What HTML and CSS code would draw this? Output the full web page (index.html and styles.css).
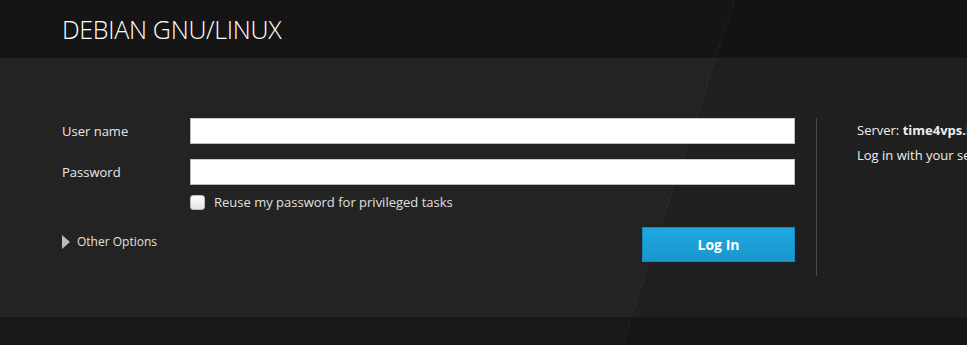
FILE: index.html
```html
<!DOCTYPE html>
<html lang="en">
<head>
    <meta name="viewport" content="width=device-width, initial-scale=1.0" />
    <title>Log in</title>
    <link rel="stylesheet" href="styles.css">
</head>
<body>
    <header class="brand">
        <h1>DEBIAN GNU/LINUX</h1>
    </header>

    <main class="login-band">
        <div class="login-wrap">
            <form class="login-form">
                <label class="field-label" for="login-user">User name</label>
                <input class="field-input" id="login-user" type="text" />

                <label class="field-label" for="login-pass">Password</label>
                <input class="field-input" id="login-pass" type="password" />

                <span></span>
                <label class="reuse">
                    <input type="checkbox" class="reuse-box" />
                    <span>Reuse my password for privileged tasks</span>
                </label>

                <div class="bottom-row">
                    <a class="other-options"><span class="caret"></span>Other Options</a>
                    <button type="button" class="login-button">Log In</button>
                </div>
            </form>

            <div class="divider"></div>

            <div class="server-info">
                <p>Server: <b>time4vps.lt</b></p>
                <p>Log in with your server user account.</p>
            </div>
        </div>
    </main>

    <footer class="bottom-band"></footer>
</body>
</html>
```

FILE: styles.css
```css
html, body {
    height: 100%;
}
body {
    margin: 0;
    font-family: "Open Sans", "Liberation Sans", sans-serif;
    background-color: #181818;
    color: #e6e6e6;
    overflow: hidden;
}

/* diagonal shade on the right side, fixed to the window so the bands line up */
.brand,
.login-band,
.bottom-band {
    background-image: linear-gradient(108deg, transparent 698px, rgba(255, 255, 255, 0.035) 698px, rgba(255, 255, 255, 0.035) 699px, rgba(0, 0, 0, 0.1) 699px);
    background-attachment: fixed;
}

.brand {
    height: 58px;
    background-color: #151515;
    padding-left: 62px;
    display: flex;
    align-items: center;
    box-sizing: border-box;
}
.brand h1 {
    margin: 0;
    font-size: 25px;
    font-weight: 300;
    color: #fff;
    letter-spacing: -0.3px;
}

.login-band {
    height: 259px;
    background-color: #232323;
    padding: 60px 0 0 62px;
    box-sizing: border-box;
}
.login-wrap {
    display: flex;
    align-items: flex-start;
}

.login-form {
    width: 733px;
    flex-shrink: 0;
    display: grid;
    grid-template-columns: 128px 1fr;
    row-gap: 15px;
    align-items: center;
}
.field-label {
    font-size: 13px;
    color: #e8e8e8;
}
.field-input {
    height: 26px;
    box-sizing: border-box;
    border: 1px solid #bbb;
    border-top-color: #ccc;
    background: #fff;
    margin: 0;
}

.reuse {
    display: flex;
    align-items: center;
    gap: 9px;
    font-size: 13px;
    color: #e0e0e0;
    margin-top: -7px;
}
.reuse-box {
    appearance: none;
    width: 15px;
    height: 15px;
    margin: 0;
    border-radius: 3px;
    border: 1px solid #bbb;
    background: linear-gradient(#fff, #e4e4e4);
}

.bottom-row {
    grid-column: 1 / 3;
    display: flex;
    justify-content: space-between;
    align-items: flex-start;
    margin-top: 1px;
}
.other-options {
    display: flex;
    align-items: center;
    gap: 7px;
    font-size: 12px;
    color: #e0e0e0;
    margin-top: 6px;
}
.caret {
    width: 0;
    height: 0;
    border-top: 7px solid transparent;
    border-bottom: 7px solid transparent;
    border-left: 8px solid #bbb;
}
.login-button {
    width: 153px;
    height: 35px;
    border: 1px solid #1788bf;
    background: linear-gradient(#1ea9e3, #1a96cc);
    color: #fff;
    font-family: "Open Sans", "Liberation Sans", sans-serif;
    font-size: 14px;
    font-weight: 700;
    cursor: pointer;
}

.divider {
    width: 1px;
    height: 158px;
    flex-shrink: 0;
    background-color: #4a4a4a;
    margin-left: 21px;
}

.server-info {
    margin-left: 40px;
    white-space: nowrap;
    font-size: 13px;
    color: #eee;
}
.server-info p {
    margin: 0 0 7px 0;
}
.server-info p:first-child {
    margin-top: 3px;
}

.bottom-band {
    height: 28px;
    background-color: #181818;
}
```
